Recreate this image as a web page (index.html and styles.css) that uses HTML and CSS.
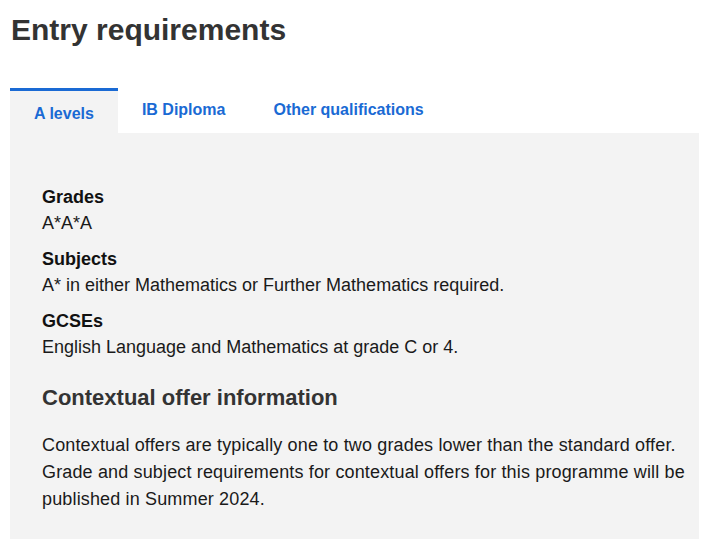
FILE: index.html
```html
<!DOCTYPE html>
<html lang="en">
<head>
<meta charset="utf-8">
<title>Entry requirements</title>
<link rel="stylesheet" href="styles.css">
</head>
<body>
<div class="page">
  <h1 class="title">Entry requirements</h1>
  <div class="tabs">
    <div class="tab tab-active">A levels</div>
    <div class="tab">IB Diploma</div>
    <div class="tab">Other qualifications</div>
  </div>
  <div class="panel">
    <dl class="reqs">
      <dt>Grades</dt>
      <dd>A*A*A</dd>
      <dt>Subjects</dt>
      <dd>A* in either Mathematics or Further Mathematics required.</dd>
      <dt>GCSEs</dt>
      <dd>English Language and Mathematics at grade C or 4.</dd>
    </dl>
    <h2 class="sub">Contextual offer information</h2>
    <p class="para">Contextual offers are typically one to two grades lower than the standard offer. Grade and subject requirements for contextual offers for this programme will be published in Summer 2024.</p>
  </div>
</div>
</body>
</html>
```
FILE: styles.css
```css
html, body {
  margin: 0;
  padding: 0;
  background: #ffffff;
}
body {
  font-family: "Liberation Sans", Arial, Helvetica, sans-serif;
  color: #1a1a1a;
}
.page {
  padding: 0 22px 0 10px;
}
.title {
  margin: 12px 0 0 1px;
  font-size: 30px;
  line-height: 36px;
  font-weight: 700;
  color: #333333;
}
.tabs {
  display: flex;
  margin-top: 40px;
  height: 45px;
}
.tab {
  box-sizing: border-box;
  height: 45px;
  padding: 12px 24px 0;
  font-size: 16px;
  line-height: 20px;
  font-weight: 700;
  color: #1a6ad4;
}
.tab-active {
  background: #f3f3f3;
  border-top: 3px solid #1a6ad4;
  padding-top: 13px;
}
.panel {
  background: #f3f3f3;
  padding: 51px 6px 26px 32px;
}
.reqs {
  margin: 0;
}
.reqs dt {
  font-size: 18px;
  line-height: 26px;
  font-weight: 700;
  color: #111111;
}
.reqs dd {
  margin: 0 0 10px;
  font-size: 18px;
  line-height: 26px;
  color: #1a1a1a;
}
.reqs dd:last-child {
  margin-bottom: 0;
}
.sub {
  margin: 23px 0 0;
  font-size: 22px;
  line-height: 30px;
  font-weight: 700;
  color: #333333;
}
.para {
  margin: 19px 0 0;
  font-size: 18px;
  line-height: 27px;
  letter-spacing: 0.15px;
  color: #1a1a1a;
}
```
